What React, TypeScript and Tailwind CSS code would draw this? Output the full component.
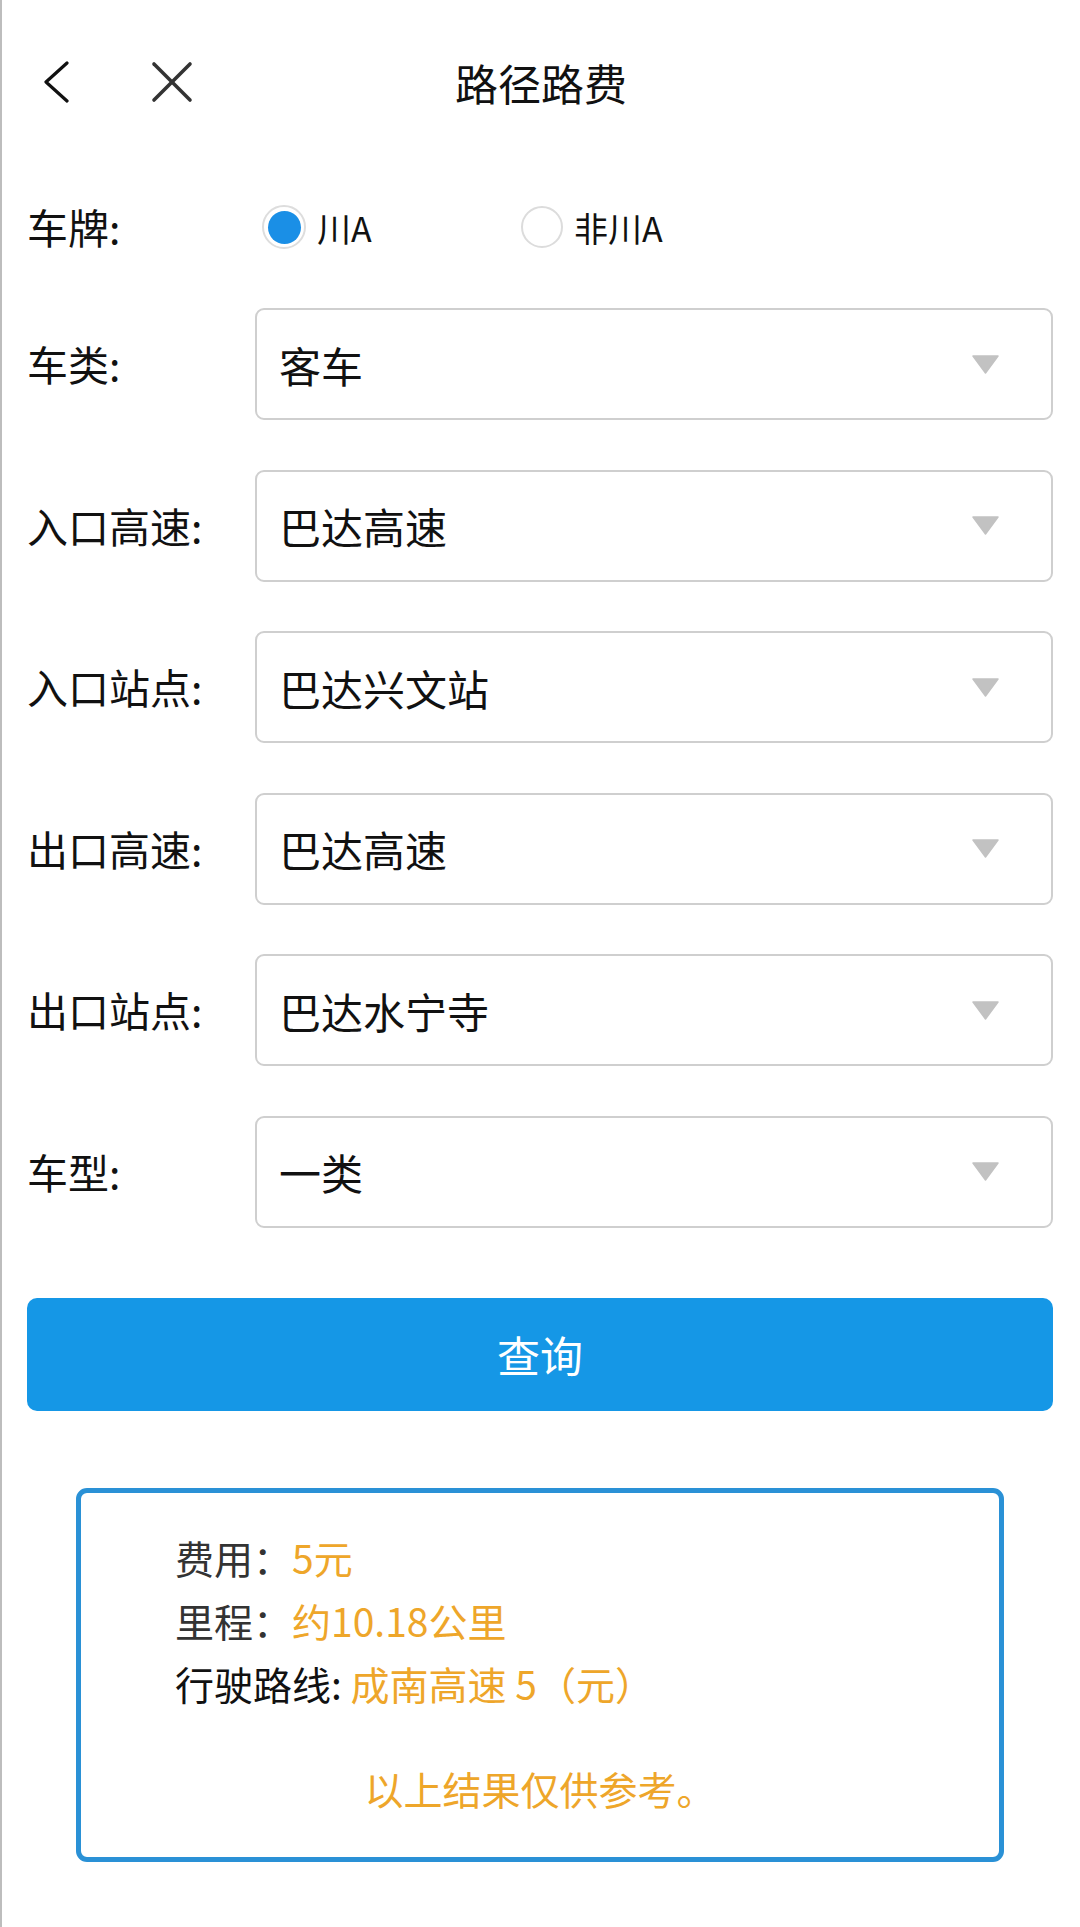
import { useState } from "react";

const selects = [
  { label: "车类:", value: "客车" },
  { label: "入口高速:", value: "巴达高速" },
  { label: "入口站点:", value: "巴达兴文站" },
  { label: "出口高速:", value: "巴达高速" },
  { label: "出口站点:", value: "巴达水宁寺" },
  { label: "车型:", value: "一类" },
];

function Radio({ checked, text, onClick }: { checked: boolean; text: string; onClick: () => void }) {
  return (
    <button type="button" onClick={onClick} className="flex items-center gap-[11px]">
      {checked ? (
        <span className="w-[44px] h-[44px] rounded-full border-2 border-[#ddd] bg-white flex items-center justify-center">
          <span className="w-[33px] h-[33px] rounded-full bg-[#1a8fe6]" />
        </span>
      ) : (
        <span className="w-[42px] h-[42px] rounded-full border-2 border-[#dcdcdc] bg-white" />
      )}
      <span className="text-[34px] text-[#111]">{text}</span>
    </button>
  );
}

export default function App() {
  const [plate, setPlate] = useState("chuan");

  return (
    <div
      className="w-[1080px] h-[1927px] bg-white border-l-2 border-[#bdbdbd] text-[#111]"
      style={{ fontFamily: '"Noto Sans CJK SC", "Noto Sans", sans-serif' }}
    >
      {/* header */}
      <div className="h-[164px] grid grid-cols-[1fr_auto_1fr] items-center">
        <div className="flex items-center pl-[42px] gap-[81px]">
          <svg width="26" height="42" viewBox="0 0 26 42" fill="none">
            <polyline points="23,2 2,21 23,40" stroke="#111" strokeWidth="3.2" strokeLinecap="round" strokeLinejoin="round" />
          </svg>
          <svg width="42" height="42" viewBox="0 0 42 42" fill="none">
            <line x1="3" y1="3" x2="39" y2="39" stroke="#333" strokeWidth="3.6" strokeLinecap="round" />
            <line x1="39" y1="3" x2="3" y2="39" stroke="#333" strokeWidth="3.6" strokeLinecap="round" />
          </svg>
        </div>
        <h1 className="text-[43px] leading-none text-[#111]">路径路费</h1>
        <div />
      </div>

      <div className="pl-[25px] pr-[27px]">
        {/* plate */}
        <div className="h-[126px] flex items-center">
          <div className="w-[228px] text-[41px]">车牌:</div>
          <div className="flex items-center pl-[7px]">
            <div className="w-[259px]">
              <Radio checked={plate === "chuan"} text="川A" onClick={() => setPlate("chuan")} />
            </div>
            <Radio checked={plate === "other"} text="非川A" onClick={() => setPlate("other")} />
          </div>
        </div>

        {/* selects */}
        <div className="mt-[18px] flex flex-col gap-[49.5px]">
          {selects.map((s) => (
            <div key={s.label} className="flex items-center h-[112px]">
              <div className="w-[228px] text-[41px]">{s.label}</div>
              <div className="flex-1 h-full border-2 border-[#cfcfcf] rounded-[9px] flex items-center justify-between pl-[22px] pr-[52px]">
                <span className="text-[42px] text-[#111]">{s.value}</span>
                <svg width="27" height="19" viewBox="0 0 27 19">
                  <polygon points="1,1 26,1 13.5,18" fill="#c2c2c2" stroke="#c2c2c2" strokeWidth="1.5" strokeLinejoin="round" />
                </svg>
              </div>
            </div>
          ))}
        </div>

        <button
          type="button"
          className="mt-[70px] w-full h-[113px] rounded-[10px] bg-[#1597e6] text-white text-[43px] flex items-center justify-center"
        >
          查询
        </button>

        {/* result */}
        <div className="mt-[77px] ml-[49px] w-[928px] h-[374px] border-[5px] border-[#2a91d6] rounded-[11px] pl-[94px] pt-[33px]">
          <div className="text-[39px] leading-[63px]">
            <div>
              <span className="text-[#333]">费用：</span>
              <span className="text-[#eea62a]">5元</span>
            </div>
            <div>
              <span className="text-[#333]">里程：</span>
              <span className="text-[#eea62a]">约10.18公里</span>
            </div>
            <div>
              <span className="text-[#111]">行驶路线: </span>
              <span className="text-[#eea62a]">成南高速 5（元）</span>
            </div>
          </div>
          <div className="mt-[42px] -ml-[94px] text-center text-[39px] leading-[63px] text-[#eea62a]">以上结果仅供参考。</div>
        </div>
      </div>
    </div>
  );
}
